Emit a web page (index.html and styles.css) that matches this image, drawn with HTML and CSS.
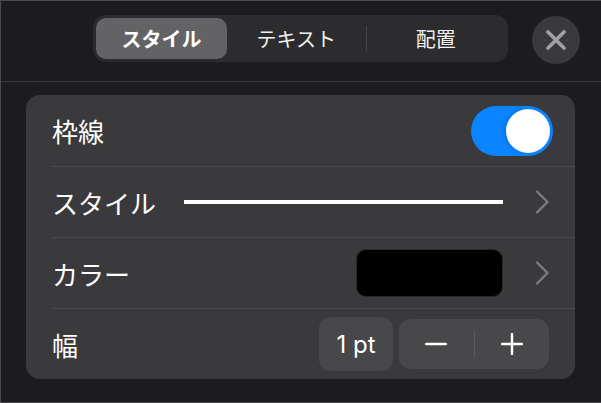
FILE: index.html
```html
<!DOCTYPE html>
<html lang="ja">
<head>
<meta charset="utf-8">
<link rel="stylesheet" href="styles.css">
</head>
<body>
<div class="frame">
  <header class="header">
    <div class="segmented">
      <div class="seg seg-active">スタイル</div>
      <div class="seg">テキスト</div>
      <div class="seg-divider"></div>
      <div class="seg">配置</div>
    </div>
    <div class="close">
      <svg width="20" height="20" viewBox="0 0 20 20"><path d="M2 2 L18 18 M18 2 L2 18" stroke="#a1a1a6" stroke-width="3.6" stroke-linecap="round" fill="none"/></svg>
    </div>
  </header>
  <section class="card">
    <div class="row">
      <span class="label">枠線</span>
      <div class="toggle"><div class="knob"></div></div>
    </div>
    <div class="row">
      <span class="label">スタイル</span>
      <div class="line"></div>
      <svg class="chev" width="18" height="24" viewBox="0 0 18 24"><path d="M2 1.5 L12.5 12 L2 22.5" stroke="#7c7c80" stroke-width="2.4" fill="none" stroke-linecap="round" stroke-linejoin="round"/></svg>
    </div>
    <div class="row">
      <span class="label">カラー</span>
      <div class="swatch"></div>
      <svg class="chev" width="18" height="24" viewBox="0 0 18 24"><path d="M2 1.5 L12.5 12 L2 22.5" stroke="#7c7c80" stroke-width="2.4" fill="none" stroke-linecap="round" stroke-linejoin="round"/></svg>
    </div>
    <div class="row">
      <span class="label">幅</span>
      <div class="value">1 pt</div>
      <div class="stepper">
        <div class="step">
          <svg width="22" height="22" viewBox="0 0 22 22"><path d="M1 11 H21" stroke="#fff" stroke-width="2.4" stroke-linecap="round"/></svg>
        </div>
        <div class="step-divider"></div>
        <div class="step">
          <svg width="22" height="22" viewBox="0 0 22 22"><path d="M1 11 H21 M11 1 V21" stroke="#fff" stroke-width="2.4" stroke-linecap="round"/></svg>
        </div>
      </div>
    </div>
  </section>
</div>
</body>
</html>
```
FILE: styles.css
```css
* { box-sizing: border-box; }
html, body { margin: 0; padding: 0; background: #1c1c1e; }
body {
  width: 601px;
  height: 403px;
  overflow: hidden;
  font-family: "Noto Sans CJK JP", "Noto Sans", sans-serif;
  color: #fff;
}
.frame {
  width: 601px;
  height: 403px;
  border-top: 1px solid #4a4a4c;
  border-left: 1px solid #4a4a4c;
  border-bottom: 1px solid #4a4a4c;
  background: #1c1c1e;
}
.header {
  height: 81px;
  border-bottom: 1px solid #38383a;
  display: flex;
  align-items: flex-start;
  padding: 14px 0 0 92px;
  gap: 24px;
}
.segmented {
  width: 415px;
  height: 47px;
  background: #2c2c2e;
  border-radius: 13px;
  padding: 3px;
  display: flex;
  align-items: center;
}
.seg {
  flex: 1;
  height: 41px;
  display: flex;
  align-items: center;
  justify-content: center;
  font-size: 20px;
  color: #f2f2f2;
  border-radius: 10px;
}
.seg-active {
  background: #636366;
  font-weight: 700;
  color: #fff;
  flex: 0 0 131px;
}
.seg-divider {
  width: 1px;
  height: 25px;
  background: #48484a;
}
.close {
  width: 48px;
  height: 48px;
  border-radius: 50%;
  background: #3a3a3c;
  display: flex;
  align-items: center;
  justify-content: center;
  margin-top: 1px;
}
.card {
  margin: 13px 0 0 25px;
  width: 549px;
  height: 284px;
  background: #3a3a3c;
  border-radius: 14px;
  padding-left: 26px;
}
.row {
  height: 71px;
  display: flex;
  align-items: center;
  padding-right: 22px;
}
.row + .row { border-top: 1px solid #4a4a4c; }
.label {
  font-size: 26px;
  color: #fff;
  white-space: nowrap;
}
.toggle {
  margin-left: auto;
  width: 82px;
  height: 50px;
  border-radius: 25px;
  background: #0a84ff;
  padding: 3px;
  display: flex;
  justify-content: flex-end;
}
.knob {
  width: 44px;
  height: 44px;
  border-radius: 50%;
  background: #fff;
  box-shadow: -2px 0 4px rgba(0,0,0,0.12);
}
.line {
  flex: 1;
  height: 4px;
  background: #fff;
  margin-left: 28px;
  margin-right: 32px;
}
.chev { display: block; }
.swatch {
  margin-left: auto;
  margin-right: 32px;
  width: 147px;
  height: 48px;
  border-radius: 10px;
  background: #000;
  border: 1px solid #2a2a2c;
}
.value {
  margin-left: auto;
  width: 74px;
  height: 54px;
  border-radius: 12px;
  background: #48484a;
  display: flex;
  align-items: center;
  justify-content: center;
  font-family: Inter, "Noto Sans", sans-serif;
  font-size: 24px;
  color: #fff;
}
.stepper {
  margin-left: 6px;
  margin-right: 4px;
  width: 150px;
  height: 50px;
  border-radius: 12px;
  background: #48484a;
  display: flex;
  align-items: center;
}
.step {
  flex: 1;
  display: flex;
  align-items: center;
  justify-content: center;
}
.step svg { display: block; }
.step-divider {
  width: 1px;
  height: 28px;
  background: #5c5c5f;
}
```
